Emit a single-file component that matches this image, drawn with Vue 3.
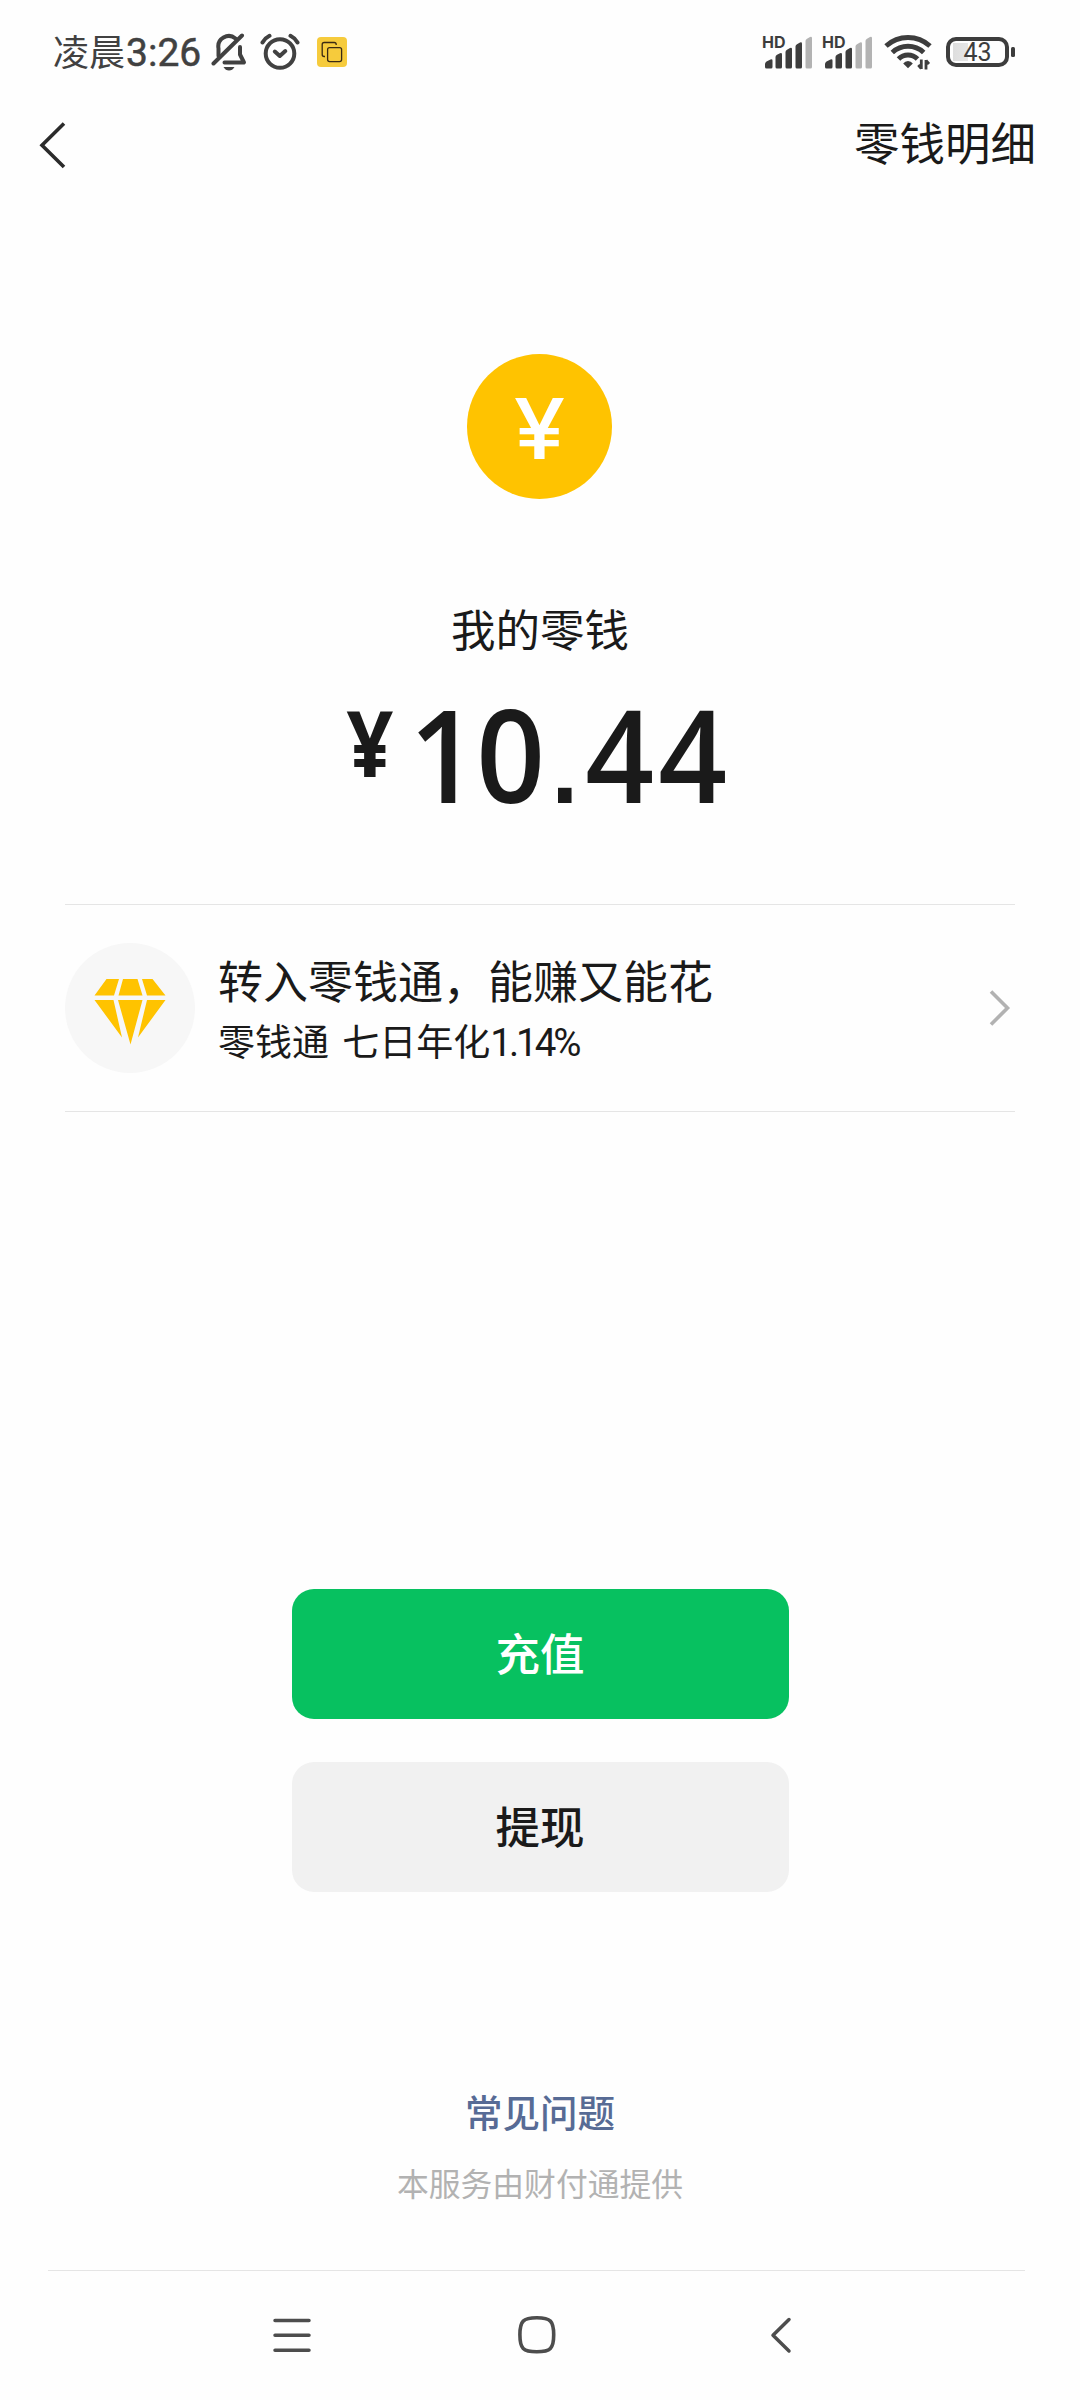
<script setup>
const signals = [
  { id: 'sim1', active: 4 },
  { id: 'sim2', active: 3 },
]
const bars = [
  'M1 31v-3q0-1.500 1.500-2.500l4-2q2-.8 2 1.200V31q0 1.500-1.500 1.500H2.500Q1 32.500 1 31z',
  'M11.500 31V21q0-1.500 1.500-2.200l3-1.500q2-.8 2 1.200V31q0 1.500-1.500 1.500H13q-1.500 0-1.500-1.500z',
  'M21.500 31V16q0-1.500 1.500-2.200l3-1.700q2-.8 2 1.200V31q0 1.500-1.500 1.500H23q-1.500 0-1.500-1.500z',
  'M31.500 31V10.500q0-1.500 1.500-2.200l3-1.700q2-.8 2 1.200V31q0 1.500-1.500 1.500H33q-1.500 0-1.500-1.500z',
  'M41.500 31V5q0-1.500 1.500-2.200l3-1.700q2-.8 2 1.200V31q0 1.500-1.500 1.500H43q-1.500 0-1.500-1.500z',
]
const balance = '10.44'
const cellClass = (c) => ({ one: c === '1', dot: c === '.' })
</script>

<template>
  <div class="screen">
    <header class="status">
      <div class="status-left">
        <span class="clock">凌晨<span class="digits">3:26</span></span>
        <svg class="bell" width="36" height="38" viewBox="0 0 36 38" fill="none" stroke="#414141" stroke-width="4" stroke-linecap="round" stroke-linejoin="round">
          <path d="M7.500 23V15.500A10.500 10.500 0 0 1 24.500 5.500" />
          <path d="M29 14v7.500l4 8H13.500" />
          <path d="M2.500 30.500L31 2.500" />
          <path d="M12.500 34h11q-2 3.500-5.500 3.500T12.500 34z" fill="#414141" stroke="none" />
        </svg>
        <svg class="alarm" width="40" height="38" viewBox="0 0 40 38" fill="none" stroke="#414141" stroke-width="4" stroke-linecap="round" stroke-linejoin="round">
          <circle cx="20" cy="20.500" r="14.300" />
          <path d="M14.800 18.500l5 4.500 5.500-5" />
          <path d="M2.500 9.500Q5 5 9.500 2.800M37.500 9.500Q35 5 30.500 2.800" />
        </svg>
        <svg class="copy" width="30" height="30" viewBox="0 0 30 30" fill="none" stroke="#3b2a12" stroke-width="1.300">
          <rect width="30" height="30" rx="4" fill="#f6cb3c" stroke="none" />
          <rect x="10.600" y="10.600" width="14" height="14" rx="2" />
          <path d="M8 19.500H7.200Q5.200 19.500 5.200 17.500V7.500q0-2 2-2h10q2 0 2 2V8" />
        </svg>
      </div>
      <div class="status-right">
        <div v-for="s in signals" :key="s.id" class="signal">
          <span class="hd">HD</span>
          <svg width="50" height="33" viewBox="0 0 50 33">
            <path v-for="(d, i) in bars" :key="i" :d="d" :fill="i < s.active ? '#3d3d3d' : '#b3b3b3'" />
          </svg>
        </div>
        <svg class="wifi" width="48" height="36" viewBox="0 0 48 36" fill="none" stroke="#3d3d3d" stroke-width="5">
          <path d="M2 12Q11.500 3.500 24 3.500T46 12" />
          <path d="M8.300 18.500Q15 12.300 24 12.300T39.700 18.500" />
          <path d="M14.500 25Q18.500 21 24 21T33.500 25" />
          <path d="M24 34.300l-4.800-4.800q1.800-2.500 4.800-2.500t4.800 2.500z" fill="#3d3d3d" stroke="none" />
          <path d="M37.300 25.500v9.500M37.300 34.500l-3-3.500M42 35.500V26M42 26.500l3 3.500" stroke-width="2.800" />
        </svg>
        <div class="battery"><span>43</span></div>
        <i class="battery-tip"></i>
      </div>
    </header>

    <nav class="topbar">
      <svg width="28" height="50" viewBox="0 0 28 50" fill="none" stroke="#2b2b2b" stroke-width="3.600">
        <path d="M26 3.500L4 25.200 26 47" />
      </svg>
      <span class="topbar-link">零钱明细</span>
    </nav>

    <main>
      <div class="coin"><span>¥</span></div>
      <div class="label">我的零钱</div>
      <div class="amount">
        <span class="yen">¥</span>
        <span class="num"><span v-for="(c, i) in balance" :key="i" class="cell" :class="cellClass(c)">{{ c }}</span></span>
      </div>

      <section class="promo">
        <div class="gem">
          <svg width="72" height="68" viewBox="0 0 72 68" fill="#ffc300">
            <path d="M12.500 1h12.500l-5 16.500H.5zM29 1h14.500l5 16.500H24.500zM48 1h10.500L71.500 17.500H53z" />
            <path d="M.5 22h19L28 59.500zM24 22h24.500L36.500 66.500zM53 22h18.500L44 59.500z" />
          </svg>
        </div>
        <div class="promo-text">
          <div class="promo-title">转入零钱通，能赚又能花</div>
          <div class="promo-sub">零钱通 七日年化<span>1.14%</span></div>
        </div>
        <svg class="chevron" width="24" height="40" viewBox="0 0 24 40" fill="none" stroke="#b2b2b2" stroke-width="3.600">
          <path d="M3 3.500L19.500 20 3 36.500" />
        </svg>
      </section>

      <div class="actions">
        <button class="primary">充值</button>
        <button class="secondary">提现</button>
      </div>

      <a class="faq">常见问题</a>
      <div class="provider">本服务由财付通提供</div>
    </main>

    <footer class="sysnav">
      <svg width="42" height="42" viewBox="0 0 42 42" fill="none" stroke="#4d4d4d" stroke-width="3.500" stroke-linecap="round">
        <path d="M4 6.500h34M4 21.300h34M4 36.200h34" />
      </svg>
      <svg width="42" height="42" viewBox="0 0 42 42" fill="none" stroke="#4d4d4d" stroke-width="3.600">
        <path d="M20.800 3.800C34.500 3.800 37.700 7 37.700 20.800S34.500 37.800 20.800 37.800 3.900 34.600 3.900 20.800 7.100 3.800 20.800 3.800z" />
      </svg>
      <svg width="42" height="42" viewBox="0 0 42 42" fill="none" stroke="#4d4d4d" stroke-width="3.500" stroke-linecap="round" stroke-linejoin="round">
        <path d="M29 5.500L13 21.300 29 37" />
      </svg>
    </footer>
  </div>
</template>

<style>
body {
  background: #fefefe;
}
</style>

<style scoped>
.screen {
  width: 1080px;
  height: 2400px;
  background: #fefefe;
  color: #1a1a1a;
  font-family: "Noto Sans CJK SC", sans-serif;
  display: flex;
  flex-direction: column;
  overflow: hidden;
  white-space: nowrap;
}
.status {
  height: 100px;
  box-sizing: border-box;
  padding: 0 65px 0 53px;
  display: flex;
  justify-content: space-between;
  flex: none;
}
.status-left,
.status-right {
  display: flex;
  align-items: flex-start;
}
.clock {
  width: 158px;
  margin-top: 25px;
  font-size: 36px;
  line-height: 50px;
  color: #414141;
}
.digits {
  font-family: Roboto, sans-serif;
  font-size: 39px;
  line-height: 1;
  margin-left: 1px;
  -webkit-text-stroke: 0.5px #414141;
}
.bell {
  margin-top: 33px;
}
.alarm {
  margin: 33px 0 0 13px;
}
.copy {
  margin: 37px 0 0 17px;
}
.signal {
  position: relative;
  width: 50px;
  margin: 36px 10px 0 0;
}
.signal svg {
  display: block;
}
.hd {
  position: absolute;
  left: -2px;
  top: -2px;
  font: 700 16px/16px Inter, sans-serif;
  color: #3d3d3d;
}
.wifi {
  margin: 34px 14px 0 0;
}
.battery {
  width: 63px;
  height: 30px;
  box-sizing: border-box;
  margin-top: 37px;
  border: 4px solid #3d3d3d;
  border-radius: 10px;
  background: linear-gradient(90deg, #dedede, #e6e6e6) 3px 2px / 15px 18px no-repeat;
  text-align: center;
  color: #3d3d3d;
  font: 25px/23px Roboto, sans-serif;
}
.battery-tip {
  width: 4px;
  height: 10px;
  margin: 47px 0 0 2px;
  border-radius: 1.5px;
  background: #3d3d3d;
}
.topbar {
  height: 90px;
  padding: 0 44px 0 38px;
  display: flex;
  align-items: center;
  justify-content: space-between;
  flex: none;
}
.topbar-link {
  font-size: 45.5px;
  line-height: 60px;
  margin-bottom: 8px;
}
main {
  flex: 1;
  display: flex;
  flex-direction: column;
  align-items: center;
}
.coin {
  width: 145px;
  height: 145px;
  box-sizing: border-box;
  margin: 164px 2px 0 0;
  padding-top: 4px;
  border-radius: 50%;
  background: #ffc300;
  display: flex;
  align-items: center;
  justify-content: center;
  color: #fff;
  font: 500 84px/84px Inter, sans-serif;
}
.coin span {
  transform: scaleX(1.1);
}
.label {
  margin-top: 98px;
  font-size: 44.5px;
  line-height: 62px;
}
.amount {
  height: 180px;
  width: 390px;
  display: flex;
  align-items: flex-start;
  font-family: "Open Sans", sans-serif;
  font-weight: 600;
}
.yen {
  width: 52px;
  margin: 38px 11px 0 -1px;
  font-size: 91px;
  line-height: 91px;
  font-weight: 700;
  transform: scaleX(0.9);
}
.num {
  display: flex;
  align-items: baseline;
  margin-top: 31px;
  font-size: 128px;
  line-height: 128px;
}
.cell {
  width: 73px;
  text-align: center;
  transform: scaleX(0.94);
}
.cell.one {
  margin-right: -6px;
}
.cell.dot {
  width: 35.5px;
  font-family: "Liberation Sans", sans-serif;
  font-weight: 700;
  font-size: 102px;
  line-height: 102px;
}
.promo {
  width: 950px;
  height: 208px;
  margin-top: 65px;
  box-sizing: border-box;
  border-top: 1px solid #e5e5e5;
  border-bottom: 1px solid #e5e5e5;
  display: flex;
  align-items: center;
}
.gem {
  width: 130px;
  height: 130px;
  border-radius: 50%;
  background: #f7f7f7;
  display: flex;
  align-items: center;
  justify-content: center;
}
.gem svg {
  margin-top: 7px;
}
.promo-text {
  margin: 1px 0 0 23px;
}
.promo-title {
  font-size: 45px;
  line-height: 62px;
}
.promo-sub {
  font-size: 37px;
  line-height: 58px;
  word-spacing: 5px;
}
.promo-sub span {
  font-family: Roboto, sans-serif;
  font-size: 38.5px;
  line-height: 1;
  letter-spacing: -3px;
}
.chevron {
  margin-left: auto;
  margin-right: 3px;
}
.actions {
  margin-top: 477px;
  display: flex;
  flex-direction: column;
  gap: 43px;
}
.actions button {
  width: 497px;
  height: 130px;
  border: 0;
  border-radius: 22px;
  padding: 0 0 4px;
  font: 500 44.5px/60px "Noto Sans CJK SC", sans-serif;
}
.primary {
  background: #07c160;
  color: #fff;
}
.secondary {
  background: #f1f1f1;
  color: #1a1a1a;
}
.faq {
  margin-top: 194px;
  font-size: 37.5px;
  line-height: 50px;
  font-weight: 500;
  color: #576b95;
}
.provider {
  margin-top: 24px;
  font-size: 31.8px;
  line-height: 44px;
  color: #b2b2b2;
}
.sysnav {
  width: 977px;
  height: 130px;
  margin-left: 48px;
  box-sizing: border-box;
  border-top: 1px solid #e5e5e5;
  padding: 43px 223px 0 223px;
  display: flex;
  align-items: flex-start;
  justify-content: space-between;
}
</style>
